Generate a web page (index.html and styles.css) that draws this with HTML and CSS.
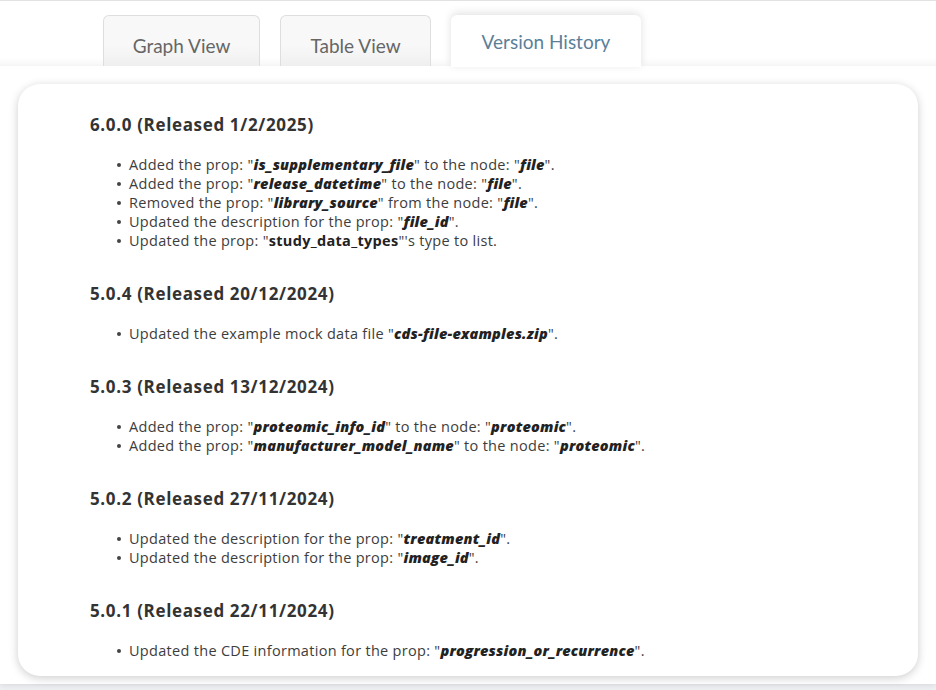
FILE: index.html
```html
<!DOCTYPE html>
<html>
<head>
<meta charset="utf-8">
<link rel="stylesheet" href="styles.css">
</head>
<body>
<header class="tabbar">
  <nav class="tabs">
    <div class="tab">Graph View</div>
    <div class="tab tab-table">Table View</div>
    <div class="tab tab-active">Version History</div>
  </nav>
</header>
<main class="panel">
  <section class="card">
    <div class="release">
      <h3>6.0.0 (Released 1/2/2025)</h3>
      <ul>
        <li>Added the prop: "<b class="prop">is_supplementary_file</b>" to the node: "<b class="prop">file</b>".</li>
        <li>Added the prop: "<b class="prop">release_datetime</b>" to the node: "<b class="prop">file</b>".</li>
        <li>Removed the prop: "<b class="prop">library_source</b>" from the node: "<b class="prop">file</b>".</li>
        <li>Updated the description for the prop: "<b class="prop">file_id</b>".</li>
        <li>Updated the prop: "<b class="strong">study_data_types</b>"'s type to list.</li>
      </ul>
    </div>
    <div class="release">
      <h3>5.0.4 (Released 20/12/2024)</h3>
      <ul>
        <li>Updated the example mock data file "<b class="prop">cds-file-examples.zip</b>".</li>
      </ul>
    </div>
    <div class="release">
      <h3>5.0.3 (Released 13/12/2024)</h3>
      <ul>
        <li>Added the prop: "<b class="prop">proteomic_info_id</b>" to the node: "<b class="prop">proteomic</b>".</li>
        <li>Added the prop: "<b class="prop">manufacturer_model_name</b>" to the node: "<b class="prop">proteomic</b>".</li>
      </ul>
    </div>
    <div class="release">
      <h3>5.0.2 (Released 27/11/2024)</h3>
      <ul>
        <li>Updated the description for the prop: "<b class="prop">treatment_id</b>".</li>
        <li>Updated the description for the prop: "<b class="prop">image_id</b>".</li>
      </ul>
    </div>
    <div class="release">
      <h3>5.0.1 (Released 22/11/2024)</h3>
      <ul>
        <li>Updated the CDE information for the prop: "<b class="prop">progression_or_recurrence</b>".</li>
      </ul>
    </div>
  </section>
</main>
</body>
</html>
```

FILE: styles.css
```css
* { box-sizing: border-box; }
html, body { margin: 0; padding: 0; }
body {
  background: #eef0f3;
  font-family: "Open Sans", "Noto Sans", sans-serif;
  color: #333;
  width: 936px;
  height: 690px;
  overflow: hidden;
}
.tabbar {
  background: #fff;
  border-top: 1px solid #e2e2e2;
  height: 66px;
  padding-top: 14px;
  position: relative;
  z-index: 2;
  box-shadow: inset 0 -10px 8px -8px rgba(0,0,0,0.06);
}
.tabs {
  display: flex;
  padding-left: 103px;
  gap: 20px;
  height: 51px;
  align-items: flex-end;
}
.tab {
  font-family: Lato, sans-serif;
  font-size: 19px;
  color: #666;
  width: 157px;
  height: 51px;
  display: flex;
  align-items: center;
  justify-content: center;
  padding-top: 8px;
  border: 1px solid #dedede;
  border-bottom: none;
  border-radius: 6px 6px 0 0;
  background: linear-gradient(#f8f8f8 60%, #efefef);
}
.tab-table { width: 151px; }
.tab-active {
  width: 190px;
  height: 52px;
  margin-bottom: -1px;
  color: #5c7f99;
  background: #fff;
  border: none;
  padding-top: 0;
  box-shadow: 0 -2px 8px rgba(0,0,0,0.12);
}
.panel {
  background: #fff;
  height: 618px;
  padding: 18px 18px 0;
  box-shadow: 0 -2px 4px rgba(0,0,0,0.12), 0 2px 6px rgba(0,0,0,0.08);
  position: relative;
  z-index: 1;
}
.card {
  background: #fff;
  border-radius: 22px;
  height: 592px;
  padding: 30px 72px 0;
  box-shadow: 0 2px 10px rgba(0,0,0,0.2);
  display: flex;
  flex-direction: column;
  gap: 33px;
}
.release h3 {
  margin: 0;
  font-size: 17px;
  letter-spacing: 0.65px;
  line-height: 22px;
  font-weight: 700;
  color: #333;
}
.release ul {
  margin: 19px 0 0;
  padding-left: 39px;
  list-style: none;
}
.release li {
  font-size: 14.5px;
  letter-spacing: 0.3px;
  line-height: 19px;
  color: #3d3d3d;
  position: relative;
}
.release li::before {
  content: "";
  position: absolute;
  left: -12px;
  top: 8px;
  width: 4px;
  height: 4px;
  border-radius: 50%;
  background: #444;
}
.prop { font-style: italic; font-weight: 800; color: #222; letter-spacing: 0.2px; }
.strong { font-weight: 700; color: #222; }
```
